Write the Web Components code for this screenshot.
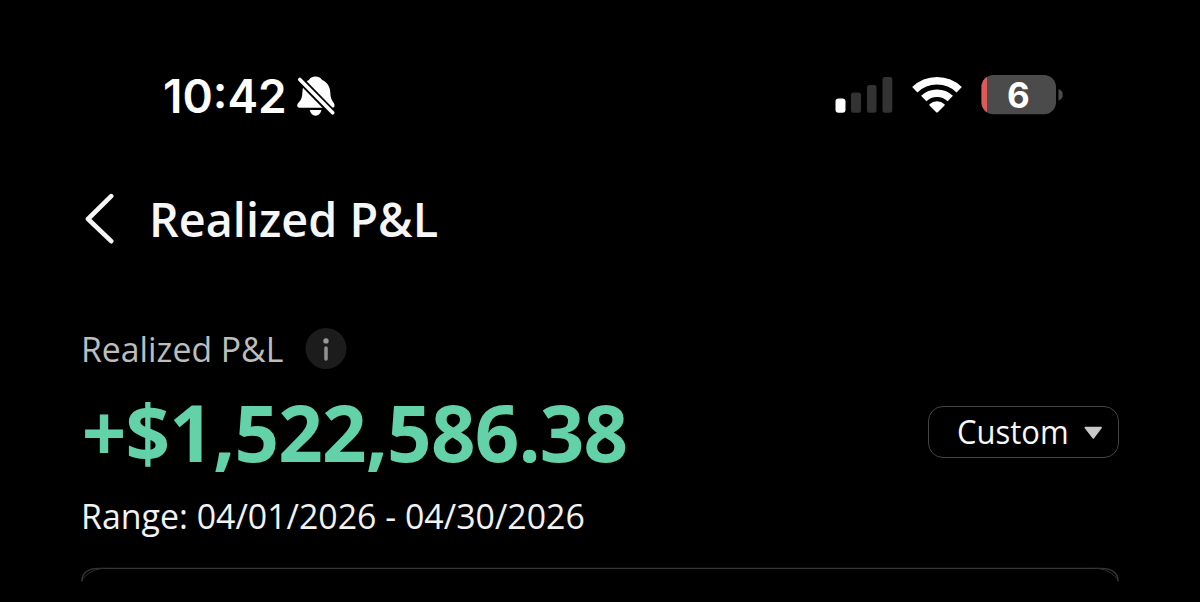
<!DOCTYPE html>
<html lang="en"><head><meta charset="utf-8"><title>Realized P&amp;L</title>
<style>html,body{margin:0;background:#000}body{width:1200px;height:602px;overflow:hidden}</style></head>
<body>
<pnl-screen></pnl-screen>
<script>
const define=(name,html)=>customElements.define(name,class extends HTMLElement{
  constructor(){super();this.attachShadow({mode:'open'}).innerHTML=html;}
});

define('status-bar',`<style>
:host{display:flex;align-items:flex-start;height:48px;padding:0 137px 0 163px;color:#fff;font:600 46px/48px Inter,sans-serif}
svg{display:block;flex:none;margin-top:3px}
.time{width:122px;white-space:nowrap}
.bell{margin-left:12px}
.spacer{flex:1}
.signal,.wifi{margin-top:4px}
.wifi{margin-left:19px}
.battery{margin-left:19px}
</style>
<div class="time"><span>10:42</span></div>
<svg class="bell" width="40" height="42" viewBox="297 75 40 42"><path fill="#fff" d="M315.500 76.600c3.200 0 5.400 1.200 6.600 3.400 5 2 7.900 6.500 8.200 12.400.3 6 1.600 7.600 3.500 10.600 1.400 2.400.8 4.700-1.700 4.700h-32.600c-2.600 0-3-2.500-1.300-4.700 3-3.400 4-5.200 4.200-10.600.2-6 2.200-10.400 6.500-12.400 1.200-2.200 3.400-3.400 6.600-3.400zM309.800 110h11.600c-.6 3.200-2.900 5.700-5.800 5.700s-5.200-2.500-5.800-5.700z"/><path stroke="#000" stroke-width="7.200" d="M298 77.500l38 39"/><path stroke="#fff" stroke-width="3.700" stroke-linecap="round" d="M299.800 79.500l32.900 33.300"/></svg>
<div class="spacer"></div>
<svg class="signal" width="58" height="38" viewBox="835 76 58 38"><rect x="835.500" y="98.500" width="10" height="14.300" rx="3" fill="#fff"/><g fill="#333"><rect x="851" y="92.500" width="10" height="20.300" rx="2.500"/><rect x="867" y="85" width="9.500" height="27.800" rx="2.500"/><rect x="882.500" y="77" width="9.800" height="35.800" rx="2.500"/></g></svg>
<svg class="wifi" width="50" height="38" viewBox="912 76 50 38"><path fill="none" stroke="#fff" stroke-width="7.600" d="M914.800 89.700a32 32 0 0 1 44.400 0M923.700 98.600a19.200 19.200 0 0 1 26.600 0"/><path fill="#fff" d="M929.500 104.200a11 11 0 0 1 15 0q.5.600 0 1.200L938 112.100q-1 1-2 0l-6.500-6.700q-.5-.6 0-1.200z"/></svg>
<svg class="battery" width="82" height="40" viewBox="981 75 82 40"><defs><clipPath id="b"><rect x="981.500" y="75" width="74.500" height="39.300" rx="12"/></clipPath></defs><g clip-path="url(#b)"><path fill="#4b4b4b" d="M981 75h76v40h-76z"/><path fill="#dc5a57" d="M981 75h6v40h-6z"/></g><path fill="#4b4b4b" d="M1058.500 89q4.300 1.500 4.300 5.800t-4.300 5.800z"/><text x="1018.300" y="107.800" text-anchor="middle" font-family="Inter" font-weight="700" font-size="35" fill="#fff">6</text></svg>`);

define('page-header',`<style>
:host{display:flex;align-items:center;height:60px;padding-left:84px;color:#f6f6f6;font:600 47px/60px "Open Sans",sans-serif}
svg{flex:none;margin-right:33px}
span{display:block;white-space:nowrap;transform-origin:0 50%;transform:scaleX(.994)}
</style><svg width="32" height="52" viewBox="84 193 32 52"><path fill="none" stroke="#f6f6f6" stroke-width="4.600" stroke-linecap="round" stroke-linejoin="round" d="M111.200 196.200L88 219l23.200 22.200"/></svg><span><slot></slot></span>`);

define('info-badge',`<style>:host{display:block}svg{display:block}</style>
<svg width="42" height="42" viewBox="0 0 42 42"><circle cx="21" cy="20.500" r="20.500" fill="#1c1c1c"/><circle cx="21" cy="12.900" r="2.700" fill="#999"/><path stroke="#929292" stroke-width="3.500" stroke-linecap="round" d="M21 20v11"/></svg>`);

define('range-select',`<style>
:host{display:flex;box-sizing:border-box;align-items:center;width:191px;height:52px;padding-left:28px;border:1.500px solid #444;border-radius:15px;color:#f8f8f8;font:400 32px/50px "Open Sans",sans-serif}
.text{width:127px}
span{display:inline-block;transform-origin:0 50%;transform:scaleX(.968)}
svg{flex:none;margin-top:2px}
</style><div class="text"><span><slot></slot></span></div><svg width="19" height="14" viewBox="0 0 19 14"><path fill="#c8c8c8" stroke="#c8c8c8" stroke-width="1.500" stroke-linejoin="round" d="M1.200 1.500h16L9.300 12z"/></svg>`);

define('pnl-summary',`<style>
:host{display:block;padding:0 81px;font-family:"Open Sans",sans-serif;white-space:nowrap}
.label{display:flex;align-items:center;height:48px;color:#bdbdbd;font-size:34px;line-height:48px}
.label>div{width:224px}
span{display:inline-block;transform-origin:0 50%}
.label span{transform:scaleX(.993)}
.row{display:flex;align-items:center;justify-content:space-between;height:100px;margin-top:9px}
.amount{box-sizing:border-box;width:560px;padding-left:.7px;color:#63d2a8;font-weight:700;font-size:78px;line-height:100px;letter-spacing:-.83px}
.range{margin-top:10px;height:48px;color:#f2f2f2;font-size:34px;line-height:48px}
.range span{transform:scaleX(.9965)}
</style>
<div class="label"><div><span>Realized P&amp;L</span></div><info-badge></info-badge></div>
<div class="row"><div class="amount"><span>+$1,522,586.38</span></div><range-select>Custom</range-select></div>
<div class="range"><span>Range: 04/01/2026 - 04/30/2026</span></div>`);

define('card-edge',`<style>:host{display:block;padding-left:81px}svg{display:block}</style>
<svg width="1038" height="15" viewBox="0 0 1038 15" fill="none" stroke="#363636"><path d="M.8 14.500C1 6 7 1.300 18 1.300H1020C1031 1.300 1037 6 1037.200 14.500" stroke-width="1.300"/><path stroke="#303030" d="M.8 14C3 9 10 1.800 24 1.300M1037.200 14C1035 9 1028 1.800 1014 1.300"/></svg>`);

define('pnl-screen',`<style>
:host{display:flex;box-sizing:border-box;flex-direction:column;width:1200px;height:602px;padding-top:72px;overflow:hidden;background:#000}
page-header{margin-top:69px}
pnl-summary{margin-top:76px}
card-edge{margin-top:27px}
</style><status-bar></status-bar><page-header>Realized P&amp;L</page-header><pnl-summary></pnl-summary><card-edge></card-edge>`);
</script>
</body></html>
